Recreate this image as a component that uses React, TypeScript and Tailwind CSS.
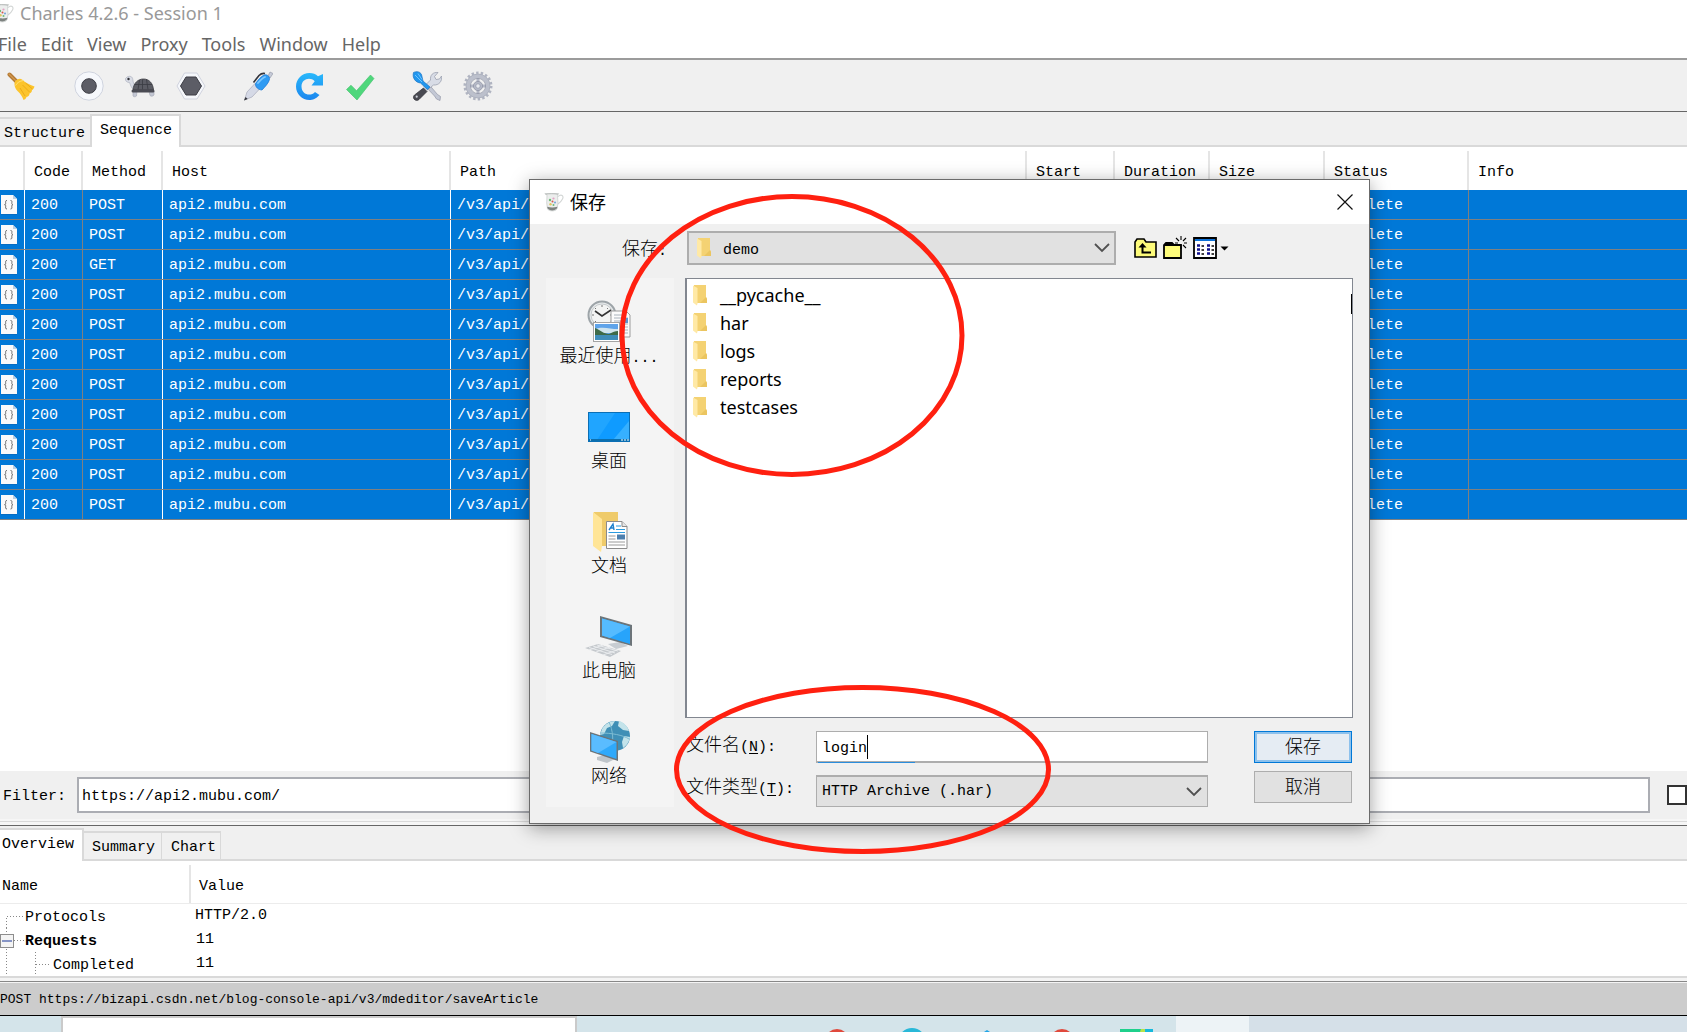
import type { ReactNode } from "react";
import clsx from "clsx";

const MONO = "font-['Liberation_Mono','Noto_Sans_CJK_SC',monospace] text-[15px]";
const SANS = "font-['Noto_Sans','Noto_Sans_CJK_SC',sans-serif] text-[18px]";

const menus = ["File", "Edit", "View", "Proxy", "Tools", "Window", "Help"];
const methods = ["POST", "POST", "GET", "POST", "POST", "POST", "POST", "POST", "POST", "POST", "POST"];
const folders = ["__pycache__", "har", "logs", "reports", "testcases"];

const columns = [
  { label: "", width: "w-[25px]", double: true },
  { label: "Code", width: "w-[58px]", double: false },
  { label: "Method", width: "w-20", double: true },
  { label: "Host", width: "w-[288px]", double: true },
  { label: "Path", width: "w-[576px]", double: true },
  { label: "Start", width: "w-[88px]", double: false },
  { label: "Duration", width: "w-[95px]", double: true },
  { label: "Size", width: "w-[115px]", double: false },
  { label: "Status", width: "w-[144px]", double: false },
  { label: "Info", width: "", double: false },
];

function JugIcon({ className }: { className?: string }) {
  return (
    <svg viewBox="0 0 20 20" className={className} aria-hidden>
      <path d="M14 4.500c3.500-3 6-.5 4.500 2.500S15.500 11 14 12" fill="none" stroke="#d3d6d5" strokeWidth="1.100" />
      <path d="M.8 1.500 3 3l-.3 8 .8 6c1.500 2.500 8 2.500 9.500 0l1-6-.5-7.500 1.200-2Z" fill="#eceeed" stroke="#c6cac8" strokeWidth=".7" />
      <path d="M3.400 16c1.500 3.200 8 3.200 9.700 0l.2-1.300c-3 1-7 1-10 0Z" fill="#7e8380" />
      <path d="M1.500 2.300c3-.8 9-.8 12.500 0" stroke="#b9bdbb" fill="none" />
      <circle cx="6" cy="8" r="1.200" fill="#6dba78" />
      <circle cx="9.500" cy="6.500" r="1.100" fill="#e3a3c2" />
      <circle cx="11" cy="10.500" r="1.100" fill="#7da9da" />
      <circle cx="6.500" cy="12.300" r="1.200" fill="#e2c562" />
      <circle cx="8.500" cy="9.500" r="1" fill="#d8564c" />
      <circle cx="9.500" cy="13" r="1" fill="#6dba78" />
    </svg>
  );
}

function BroomIcon() {
  return (
    <svg viewBox="0 0 30 30" className="size-[30px]" aria-hidden>
      <path d="m2.500 3.500 8 8" stroke="#b47a35" strokeWidth="4" strokeLinecap="round" />
      <path d="m2 3 8 8" stroke="#d29a50" strokeWidth="1.200" strokeLinecap="round" />
      <path d="M8 10.500c2-2.500 5-3.500 7-2l3 2.500c3 1.500 6 3.500 9.500 4.500-.5 2-1.500 3-2.500 3.500 0 2-1 3-2.500 3.500 0 2-1 3-3 3.500-.5 1.500-1.500 2.500-3 3-1.500-4-3-6-5.500-8.500C8.500 18 6.500 14 8 10.500Z" fill="#fcc42c" />
      <path d="m13 17 5 8m-2.500-11 7 7m-4-9 7 6" stroke="#e7a414" strokeWidth=".8" fill="none" />
      <path d="M8.500 14.500c2-3 4-4.500 8-5" stroke="#ffe07a" fill="none" />
    </svg>
  );
}

function RecordIcon() {
  return (
    <svg viewBox="0 0 30 30" className="size-[30px]" aria-hidden>
      <circle cx="15" cy="15" r="14.200" fill="#f6f8fc" stroke="#cfd3de" />
      <circle cx="15" cy="15" r="7.300" fill="#5c5d66" stroke="#3c3d45" />
    </svg>
  );
}

function TurtleIcon() {
  return (
    <svg viewBox="0 0 30 30" className="size-[30px]" aria-hidden>
      <path d="M2 6C5 4.500 7.500 5.500 7.800 8.500c.3 3 1.200 6 3.200 7.500l-2 3C6 17 5.500 13.500 4.500 11.500 2 11.500 0 10 .5 7.500Z" fill="#d9dce5" stroke="#aeb2bf" strokeWidth=".7" />
      <circle cx="3.500" cy="8" r="1.200" fill="#2f3036" />
      <path d="M8 20h4l-.5 5c-1 1-3 1-3.500 0Zm16 0h5v4c-1 1.500-3 1.500-4 .500Z" fill="#c3c7d3" stroke="#a1a5b2" strokeWidth=".6" />
      <path d="M8 19C8.500 12 13 8 18.500 8S28 12 28.500 19Z" fill="#5b5c64" stroke="#36373d" strokeWidth=".8" />
      <path d="M14.500 9 13 18.500m4.500-10v10m4-10 1.500 10M10 13.500h17" stroke="#3a3b42" strokeWidth=".8" fill="none" />
      <rect x="6.500" y="18.500" width="23" height="3" rx="1.500" fill="#4a4b53" />
    </svg>
  );
}

function HexagonIcon() {
  return (
    <svg viewBox="0 0 30 30" className="size-[30px]" aria-hidden>
      <path d="M8.500 2h12.500l8 13-8 13H8.500L1 15Z" fill="#f5f7fb" stroke="#d0d3de" />
      <path d="M10 6h10l5.500 9-5.500 9H10l-5.500-9Z" fill="#5c5d66" stroke="#3c3d45" />
    </svg>
  );
}

function PenIcon() {
  return (
    <svg viewBox="0 0 30 30" className="size-[30px]" aria-hidden>
      <path d="m1.500 29 2.500-8L12 12.500l5 5-8 8.500Z" fill="#d5d9e6" stroke="#a7abba" strokeWidth=".7" />
      <path d="m1 29.500 1.500-3.500 2.200 2Z" fill="#34353c" />
      <path d="M25 5 27 1l3 1.500L27 7Z" fill="#c7cbd8" stroke="#979cac" strokeWidth=".7" />
      <path d="M12.500 12.500c3-4 6-7.500 9-8.700 3-.5 5.500 2 5 4.700-1 3.500-4.500 7.500-7.500 10.500-3.500 0-7-3-6.500-6.500Z" fill="#2f9bf3" stroke="#1674d2" strokeWidth=".7" />
      <path d="M15 12c2.500-3 4.500-5 7-6" stroke="#7cc8ff" strokeWidth="1.800" fill="none" strokeLinecap="round" />
      <path d="M10.500 11.500 16 4.500c1.500-1.500 3.500-2.500 6-2" fill="none" stroke="#33343b" strokeWidth="1.600" />
    </svg>
  );
}

function ReloadIcon() {
  return (
    <svg viewBox="0 0 30 30" className="size-[30px]" aria-hidden>
      <defs>
        <linearGradient id="reload" x1="0" y1="0" x2="0" y2="1">
          <stop offset="0" stopColor="#29b8fb" />
          <stop offset="1" stopColor="#1b86ee" />
        </linearGradient>
      </defs>
      <path d="M15.500 2c3.500 0 6.200 1.200 8.500 3.200L29 3v11.500H17.500l3.200-4.300C16 5.500 7.500 8 7.500 15.500c0 8 9 10.500 13.500 5.500l4.500 3C22 28 18.500 29 15.500 29 8 29 2 23 2 15.500S8 2 15.500 2Z" fill="url(#reload)" />
    </svg>
  );
}

function TickIcon() {
  return (
    <svg viewBox="0 0 30 30" className="size-[30px]" aria-hidden>
      <path d="m1.500 18.500 4.500-4.300 5.500 5.500L25.500 4l3.500 3.500L12 29Z" fill="#4fd77c" stroke="#3fc069" strokeWidth=".6" />
    </svg>
  );
}

function ToolsIcon() {
  return (
    <svg viewBox="0 0 30 30" className="size-[30px]" aria-hidden>
      <path d="m14 16 3-2.500 8.500 10 3 2-.5 4-3.500-1.500-2-3Z" fill="#c3c8d5" stroke="#9398a8" strokeWidth=".7" />
      <path d="M12 15.500 18.500 9C18 4 21 1 26 1.500l-3.500 4L24 8.500l3.500-.5 2-3c1 5-2.500 9.500-8 9l-6 5Z" fill="#d8dce6" stroke="#9ca1b0" strokeWidth=".8" />
      <path d="M1.500 1.500c3-1.500 6.500-1 8 2l1.500 6.500 7 6-2.500 2.500-7-6.500C3.500 11.500 0 7 1.500 1.500Z" fill="#2196ee" stroke="#1b74c4" strokeWidth=".7" />
      <path d="m3 4 7 7M6 2.500l4 6" stroke="#6fc6ff" strokeWidth="1" />
      <path d="m11.500 17 3.500 3.500-8 8c-1.500 1.500-4 1-5-.5s-.5-3 .5-4Z" fill="#494a52" stroke="#2c2d33" strokeWidth=".7" />
      <circle cx="4.700" cy="25.700" r="1.100" fill="#cfd2da" />
    </svg>
  );
}

function GearIcon() {
  return (
    <svg viewBox="0 0 30 30" className="size-[30px]" aria-hidden>
      <circle cx="15" cy="15" r="13" fill="none" stroke="#b0b4c1" strokeWidth="3" strokeDasharray="2.400 2.139" />
      <circle cx="15" cy="15" r="10" fill="none" stroke="#bcc0cc" strokeWidth="4.400" />
      <circle cx="15" cy="15" r="12" fill="none" stroke="#a3a7b5" strokeWidth=".6" />
      <path d="M15 7v16M7 15h16" stroke="#b3b7c5" strokeWidth="3" />
      <circle cx="15" cy="15" r="7.600" fill="none" stroke="#9195a5" strokeWidth=".7" />
      <circle cx="15" cy="15" r="4.600" fill="#b6bac8" stroke="#8c91a2" strokeWidth=".7" />
      <circle cx="15" cy="15" r="2.200" fill="#e9ebf0" stroke="#8c91a2" strokeWidth=".6" />
    </svg>
  );
}

function JsonFileIcon() {
  return (
    <svg viewBox="0 0 18 20" className="h-5 w-[18px]" aria-hidden>
      <path d="M1 1h12l4 4v15H1Z" fill="#0a5fae" opacity=".5" />
      <path d="M1 0h12l4 4v15H1Z" fill="#fafafa" />
      <path d="M13 0v4h4Z" fill="#b9cfe4" />
      <path d="M7 5.500c-2 0-1.300 1.500-1.300 2.700s-.4 1.500-1.200 1.500c.8 0 1.200.4 1.200 1.500s-.7 2.800 1.300 2.800M10.500 5.500c2 0 1.300 1.500 1.300 2.700s.4 1.500 1.200 1.500c-.8 0-1.200.4-1.200 1.500s.7 2.800-1.300 2.800" fill="none" stroke="#6d6d6d" />
    </svg>
  );
}

function FolderIcon() {
  return (
    <svg viewBox="0 0 15 21" className="h-[21px] w-[15px] shrink-0" aria-hidden>
      <path d="M1 0h12v12l1 2v4H1Z" fill="#f4d273" />
      <path d="M13 12 14 14v4H7Z" fill="#ebc560" />
      <path d="M0 .5 4.500 3v15.500l-.6 2L0 17.500Z" fill="#ffe9a6" />
    </svg>
  );
}

function Chevron() {
  return (
    <svg viewBox="0 0 16 10" className="pointer-events-none absolute right-[6px] top-3 h-[10px] w-4" aria-hidden>
      <path d="m1 1 7 7 7-7" fill="none" stroke="#505050" strokeWidth="1.800" />
    </svg>
  );
}

function RecentIcon() {
  return (
    <svg viewBox="0 0 48 48" className="size-12" aria-hidden>
      <circle cx="17" cy="17" r="13.500" fill="#e7eaeb" stroke="#9da4a8" strokeWidth="2" />
      <circle cx="17" cy="17" r="11" fill="#f3f4f3" stroke="#c5cacc" />
      <path d="M17 7v2m0 16v2M7 17h2m16 0h2M10 10l1 1m12-1-1 1M10 24l1-1" stroke="#777" />
      <path d="m10 13 7 5 9-6" fill="none" stroke="#333" strokeWidth="1.600" />
      <path d="M26 13h15l4 4v22H26Z" fill="#fbfbfb" stroke="#9b9b9b" />
      <path d="M29 17h11M29 20h14M29 23h14M39 26h4M39 29h4M39 32h4M39 35h4" stroke="#a9b2bb" />
      <path d="M39 20h4v5h-4Z" fill="#5b95d0" />
      <rect x="8.500" y="24.500" width="26" height="19" fill="#fff" stroke="#a4a4a4" />
      <path d="M10 26h23v16H10Z" fill="#5fa4ea" />
      <path d="M10 31c8-3 15 0 23 0v4H10Z" fill="#cfe4ee" />
      <path d="M10 30c5 2 9 6 14 6 4-2 6-3 9-3v5H10Z" fill="#3d6a48" />
      <path d="M10 37h23v5H10Z" fill="#3e8cb8" />
    </svg>
  );
}

function DesktopIcon() {
  return (
    <svg viewBox="0 0 48 48" className="size-12" aria-hidden>
      <rect x="3.500" y="9.500" width="41" height="29" fill="#0f9bff" stroke="#0b6fb5" />
      <path d="M4 10h26L12 37H4Z" fill="#20a5ff" />
      <path d="M28 37 44 18v19Z" fill="#36b0ff" />
      <path d="M4 36h40v2H4Z" fill="#0b6fae" />
      <path d="M5 37h1m30 0h2m1 0h2m1 0h2" stroke="#fff" />
    </svg>
  );
}

function DocumentsIcon() {
  return (
    <svg viewBox="0 0 48 48" className="size-12" aria-hidden>
      <path d="M9 4h24v34H12Z" fill="#efcb6a" />
      <path d="m8 4 9 7v27l-1 6-8-6Z" fill="#ffe597" />
      <path d="M21.500 13.500H37l5 5v22H21.500Z" fill="#fff" stroke="#8b8b8b" />
      <path d="M37 13.500v5h5" fill="#e6e6e6" stroke="#8b8b8b" />
      <path d="m24 22 4-6 1 6m-3.500-2H29" stroke="#1d80cd" strokeWidth="1.400" fill="none" />
      <path d="M31 18h5M31 21.500h9M23.500 24.500H40" stroke="#2a9be0" />
      <path d="M23.500 28h7M23.500 31h7M23.500 34H40M23.500 37H40" stroke="#9a9a9a" />
      <path d="M32 26.500h8v5h-8Z" fill="#4c7fae" />
    </svg>
  );
}

function ComputerIcon() {
  return (
    <svg viewBox="0 0 48 48" className="size-12" aria-hidden>
      <path d="m23 31 12-2 8 4-12 3Z" fill="#c8cdd2" />
      <path d="m15 3 32 9v21L15 24Z" fill="#6c7479" />
      <path d="m17 5.500 28 8V31L17 22.500Z" fill="#27a4fb" />
      <path d="m17 5.500 28 8L25 25l-8-2.500Z" fill="#55bbff" />
      <path d="m0 35 13-4 23 7-11 6Z" fill="#c5c9cd" />
      <path d="m4 34.500 23 7M8 33l22 7M12 32l21 6M4 37l14-5M11 39l14-5M18 42l14-5" stroke="#eceef0" strokeWidth=".9" />
    </svg>
  );
}

function NetworkIcon() {
  return (
    <svg viewBox="0 0 48 48" className="size-12" aria-hidden>
      <circle cx="30" cy="18" r="15" fill="#3f8fb6" />
      <path d="M17 11c3-5 8-8 13-8l-3 5-5 2-3 6-4 1Zm17-8c5 1 9 6 10 10l-6-1-5-4Zm5 15 6 1c-1 6-4 9-7 11l-1-6Z" fill="#c3e3ea" />
      <path d="M24 4c4 8 5 20 2 28M16 15c10 0 22 2 28 6" stroke="#7dbcd3" fill="none" />
      <path d="m12 39 8-2 10 4-8 4-10-3Z" fill="#bfc5ca" />
      <path d="m5 14 28 9v20L5 33.500Z" fill="#6c7479" />
      <path d="m6.500 16 25 8v17l-25-8.500Z" fill="#2fa9fb" />
      <path d="m6.500 16 25 8L13 35l-6.500-2.500Z" fill="#5abcff" />
    </svg>
  );
}

function UpFolderIcon() {
  return (
    <svg viewBox="0 0 23 20" className="h-5 w-[23px]" aria-hidden>
      <path d="M1 19V4l2-3h7l2 3h10v15Z" fill="#fdfb7a" stroke="#000" strokeWidth="1.600" />
      <path d="M8.500 7v7.500H17" fill="none" stroke="#000" strokeWidth="2" />
      <path d="m4.500 9.500 4-4.500 4 4.500Z" />
    </svg>
  );
}

function NewFolderIcon() {
  return (
    <svg viewBox="0 0 24 24" className="h-6 w-6" aria-hidden>
      <path d="M1 22V9l2-2h6l2 2h7v13Z" fill="#fdfb7a" stroke="#000" strokeWidth="1.800" />
      <path d="M1 9h17" stroke="#000" strokeWidth="2" />
      <path d="M18 0v4m0 5v4M13 2l3 3m4 4 3 3m0-10-3 3M12 7h3m6 0h3" stroke="#000" strokeWidth="1.100" />
    </svg>
  );
}

function ViewMenuIcon() {
  return (
    <svg viewBox="0 0 36 22" className="h-[22px] w-9" aria-hidden>
      <path d="M1 1h22v20H1Z" fill="#fff" stroke="#000" strokeWidth="1.800" />
      <path d="M2 2h20v2H2Z" fill="#0f72d8" />
      <path d="M4 8.500h3m-3 4h3m-3 4h3M14 8.500h3m-3 4h3m-3 4h3" stroke="#10108c" strokeWidth="2.400" />
      <path d="M8.500 9H11m-2.500 4H11m-2.500 4H11M18.500 9H21m-2.500 4H21m-2.500 4H21" stroke="#000" strokeWidth="1.400" />
      <path d="M27.500 9.500h8l-4 4Z" />
    </svg>
  );
}

const toolGroups = [
  [{ name: "Clear", icon: <BroomIcon /> }],
  [
    { name: "Record", icon: <RecordIcon /> },
    { name: "Throttle", icon: <TurtleIcon /> },
    { name: "Breakpoints", icon: <HexagonIcon /> },
  ],
  [
    { name: "Compose", icon: <PenIcon /> },
    { name: "Repeat", icon: <ReloadIcon /> },
    { name: "Validate", icon: <TickIcon /> },
  ],
  [
    { name: "Tools", icon: <ToolsIcon /> },
    { name: "Settings", icon: <GearIcon /> },
  ],
];

const places = [
  { label: "最近使用", more: true, icon: <RecentIcon /> },
  { label: "桌面", icon: <DesktopIcon /> },
  { label: "文档", icon: <DocumentsIcon /> },
  { label: "此电脑", icon: <ComputerIcon /> },
  { label: "网络", icon: <NetworkIcon /> },
];

function Tab({ active, className, children }: { active?: boolean; className: string; children: ReactNode }) {
  return (
    <button
      type="button"
      className={clsx(
        "border-[#d9d9d9] text-left",
        active ? "relative z-10 h-[33px] border-x-2 border-t-2 bg-white pb-[2px]" : "h-[30px] border-t-2 border-b-2 bg-[#f0f0f0] pt-1",
        className
      )}
    >
      {children}
    </button>
  );
}

function RequestTable() {
  return (
    <table className="w-full table-fixed border-separate border-spacing-0">
      <thead>
        <tr className="h-[43px]">
          {columns.map((c, i) => (
            <th key={i} className={clsx("p-0 pt-1 text-left font-normal", c.width)}>
              <div className={clsx("flex h-[39px] items-center pt-1 pl-[9px]", i < 9 && "border-r-2 border-[#e5e5e5]")}>
                {c.label}
              </div>
            </th>
          ))}
        </tr>
      </thead>
      <tbody className="text-white">
        {methods.map((method, row) => (
          <tr key={row} className="h-[30px] bg-[#0078d7]">
            {[<JsonFileIcon />, "200", method, "api2.mubu.com", "/v3/api/", "", "", "", "Complete", ""].map((cell, i) => (
              <td key={i} className="border-b border-[#808080] p-0">
                <div
                  className={clsx(
                    "flex h-[29px] items-center",
                    i > 0 && "pt-[2px] pl-[6px]",
                    i < 9 && (columns[i].double ? "border-r border-white" : "border-r border-[#808080]")
                  )}
                >
                  {cell}
                </div>
              </td>
            ))}
          </tr>
        ))}
      </tbody>
    </table>
  );
}

function Details() {
  return (
    <table className="w-full table-fixed border-separate border-spacing-0 bg-white">
      <thead>
        <tr className="h-[43px]">
          <th className="w-[191px] border-b border-[#ececec] p-0 pt-1 text-left font-normal">
            <div className="flex h-[38px] items-center border-r-2 border-[#e5e5e5] pt-[6px] pl-[2px]">Name</div>
          </th>
          <th className="border-b border-[#ececec] p-0 pt-[10px] pl-2 text-left font-normal">Value</th>
        </tr>
      </thead>
      <tbody className="leading-6">
        <tr>
          <td className="h-6 p-0">
            <div className="flex h-6 items-center">
              <svg viewBox="0 0 25 24" className="h-6 w-[25px]" aria-hidden>
                <path d="M6.500 24V12.500H24" fill="none" stroke="#888" strokeDasharray="1 2" />
              </svg>
              <span className="pt-1">Protocols</span>
            </div>
          </td>
          <td className="h-6 p-0 pl-1">HTTP/2.0</td>
        </tr>
        <tr>
          <td className="h-6 p-0">
            <div className="flex h-6 items-center font-bold">
              <svg viewBox="0 0 25 24" className="h-6 w-[25px]" aria-hidden>
                <path d="M6.500 0v24M14 12.500h10" fill="none" stroke="#888" strokeDasharray="1 2" />
                <rect x=".5" y="6.500" width="13" height="13" fill="#f4f4f4" stroke="#8d8d8d" />
                <path d="M2 13h10" stroke="#3d54a5" strokeWidth="1.200" />
              </svg>
              <span className="pt-1">Requests</span>
            </div>
          </td>
          <td className="h-6 p-0 pl-[5px]">11</td>
        </tr>
        <tr>
          <td className="h-6 p-0">
            <div className="flex h-6 items-center">
              <svg viewBox="0 0 53 24" className="h-6 w-[53px]" aria-hidden>
                <path d="M6.500 0v24M35.500 0v24M36 12.500h14" fill="none" stroke="#888" strokeDasharray="1 2" />
              </svg>
              <span className="pt-1">Completed</span>
            </div>
          </td>
          <td className="h-6 p-0 pl-[5px]">11</td>
        </tr>
      </tbody>
    </table>
  );
}

function SaveDialog() {
  return (
    <section
      role="dialog"
      aria-labelledby="save-title"
      className="absolute left-[529px] top-[179px] z-20 w-[841px] border border-[#6b6b6b] bg-[#f0f0f0] text-black shadow-[0_4px_18px_rgba(0,0,0,0.38)]"
    >
      <header className="flex h-11 items-center bg-white pl-[14px] pr-4">
        <JugIcon className="size-5" />
        <h2 id="save-title" className={clsx(SANS, "ml-[6px] flex-1 leading-6")}>
          保存
        </h2>
        <button type="button" aria-label="Close" className="size-4">
          <svg viewBox="0 0 16 16" className="size-4" aria-hidden>
            <path d="m.5.5 15 15m0-15-15 15" stroke="#111" strokeWidth="1.200" />
          </svg>
        </button>
      </header>

      <div className="flex items-center pt-[7px]">
        <label htmlFor="save-in" className="w-[157px] pt-[6px] pl-[92px] text-[18px] leading-6 font-light">
          保存<span className="text-[15px]">:</span>
        </label>
        <div className="relative w-[429px]">
          <select
            id="save-in"
            className="h-[34px] w-full appearance-none border-2 border-[#adadad] bg-[#e1e1e1] pt-[6px] pl-[34px] outline-none"
          >
            <option>demo</option>
          </select>
          <span className="pointer-events-none absolute left-[10px] top-[7px]">
            <FolderIcon />
          </span>
          <Chevron />
        </div>
        <div className="flex items-center gap-[6px] pl-[18px]">
          <button type="button" aria-label="Up one level">
            <UpFolderIcon />
          </button>
          <button type="button" aria-label="New folder">
            <NewFolderIcon />
          </button>
          <button type="button" aria-label="View menu">
            <ViewMenuIcon />
          </button>
        </div>
      </div>

      <div className="flex gap-[11px] pt-[13px] pr-4 pb-4 pl-4">
        <nav className="flex w-32 flex-col gap-9 bg-[#f4f4f4] py-5 pr-[2px]">
          {places.map((p) => (
            <button key={p.label} type="button" className="flex flex-col items-center gap-px text-[18px] leading-5 font-light">
              {p.icon}
              <span className="block h-5">
                {p.label}
                {p.more ? <span className="text-[15px]">...</span> : null}
              </span>
            </button>
          ))}
        </nav>

        <div className="min-w-0 flex-1">
          <div className="relative">
            <ul className={clsx(SANS, "h-[440px] border-y border-r border-l-2 border-[#828790] bg-white pt-[2px] pl-[6px]")}>
              {folders.map((f) => (
                <li key={f} className="flex h-7 items-center gap-3 leading-6">
                  <FolderIcon />
                  {f}
                </li>
              ))}
            </ul>
            <span className="absolute right-px top-4 h-5 w-px bg-black" />
          </div>

          <form className="flex justify-between pt-[13px]">
            <div className="w-[523px]">
              <div className="flex h-8 items-center">
                <label htmlFor="file-name" className="w-[131px] pl-px text-[18px] font-light">
                  文件名
                  <span className="text-[15px]">
                    (<span className="underline underline-offset-2">N</span>):
                  </span>
                </label>
                <div className="relative flex-1">
                  <input
                    id="file-name"
                    defaultValue="login"
                    className="block h-8 w-full border border-b-2 border-[#adadad] bg-white px-[5px] pt-1 outline-none"
                  />
                  <span className="absolute left-[51px] top-1 h-6 w-px bg-black" />
                  <span className="absolute bottom-0 left-[2px] h-px w-[97px] bg-[#2a8ddd]" />
                </div>
              </div>
              <div className="mt-3 flex h-8 items-center">
                <label htmlFor="file-type" className="w-[131px] pb-1 pl-px text-[18px] font-light">
                  文件类型
                  <span className="text-[15px]">
                    (<span className="underline underline-offset-2">T</span>):
                  </span>
                </label>
                <div className="relative flex-1">
                  <select
                    id="file-type"
                    className="block h-8 w-full appearance-none border border-t-2 border-[#adadad] bg-[#e1e1e1] px-[5px] outline-none"
                  >
                    <option>HTTP Archive (.har)</option>
                  </select>
                  <Chevron />
                </div>
              </div>
            </div>
            <div className="flex flex-col gap-2 pr-px text-[18px] font-light">
              <button
                type="button"
                className="h-8 w-[98px] border border-[#0078d7] bg-[#e5ecf3] pt-[2px] leading-7 shadow-[inset_0_0_0_2px_#8dc1ec]"
              >
                保存
              </button>
              <button type="button" className="h-8 w-[98px] border border-[#adadad] bg-[#e1e1e1] pt-[2px] leading-7">
                取消
              </button>
            </div>
          </form>
        </div>
      </div>
    </section>
  );
}

/* Hand-drawn highlight rings above the dialog */
function Rings() {
  return (
    <svg className="pointer-events-none absolute left-[600px] top-[180px] z-30 h-[690px] w-[470px]" viewBox="0 0 470 690" aria-hidden>
      <ellipse cx="192" cy="155.500" rx="170" ry="139" fill="none" stroke="#ff2010" strokeWidth="5" />
      <ellipse cx="262.500" cy="589.500" rx="186" ry="82" fill="none" stroke="#ff2010" strokeWidth="5" />
    </svg>
  );
}

function Taskbar() {
  return (
    <footer className="flex h-4 overflow-hidden bg-[#d4e4ea] pl-[61px]">
      <div className="w-[516px] border-x-2 border-t-2 border-[#cacaca] bg-white" />
      <svg viewBox="0 0 599 16" className="h-4 w-[599px]" aria-hidden>
        <circle cx="260" cy="25" r="12" fill="#e0493c" />
        <circle cx="335" cy="26" r="14" fill="#29b8d8" />
        <path d="m410 14 3 2h-6Z" fill="#20a4e6" />
        <circle cx="485" cy="25" r="12" fill="#e0493c" />
        <path d="M543 13h21v3h-21Z" fill="#1fd08c" />
        <path d="M564 13h5v3h-6Z" fill="#b6e34a" />
        <path d="M568 13h8v3h-8Z" fill="#15b9dc" />
      </svg>
      <div className="w-[73px] bg-[#edf3f6]" />
      <div className="flex-1 bg-[#d5e0e8]" />
    </footer>
  );
}

export default function App() {
  return (
    <div className={clsx(MONO, "relative flex h-screen flex-col overflow-hidden bg-white leading-5 text-black")}>
      <header className={clsx(SANS, "flex h-7 items-center pb-[2px] text-[#999]")}>
        <JugIcon className="-ml-[6px] size-5" />
        <h1 className="ml-[6px] leading-6">Charles 4.2.6 - Session 1</h1>
      </header>
      <nav className={clsx(SANS, "flex h-8 items-center gap-[14px] border-b-2 border-[#9b9b9b] pt-[2px] text-[#666]")}>
        {menus.map((m) => (
          <button key={m} type="button" className="leading-6 first:-ml-[2px]">
            {m}
          </button>
        ))}
      </nav>

      <div className="flex h-[52px] items-center gap-[37px] border-b border-[#666] bg-[#f0f0f0] pl-[7px]">
        {toolGroups.map((group, i) => (
          <div key={i} className="flex gap-[21px]">
            {group.map((t) => (
              <button key={t.name} type="button" aria-label={t.name}>
                {t.icon}
              </button>
            ))}
          </div>
        ))}
      </div>

      <div className="flex h-[35px] items-end bg-[#f0f0f0]">
        <Tab className="w-[90px] pl-1">Structure</Tab>
        <Tab active className="w-[91px] pl-2">
          Sequence
        </Tab>
        <span className="flex-1 border-b-2 border-[#d9d9d9]" />
      </div>

      <main className="min-h-0 flex-1">
        <RequestTable />
      </main>

      <div className="flex h-12 items-center bg-[#f0f0f0] pl-[3px]">
        <label htmlFor="filter" className="w-[74px] pt-1">
          Filter:
        </label>
        <input
          id="filter"
          defaultValue="https://api2.mubu.com/"
          className="h-9 min-w-0 flex-1 border-2 border-[#abadb3] bg-white px-[3px] pt-[2px] outline-none"
        />
        <input
          type="checkbox"
          aria-label="Focused"
          className="ml-[17px] size-5 appearance-none border-2 border-[#333] bg-white"
        />
      </div>
      <div className="h-[7px] border-b border-[#666] bg-[#f6f6f6] pt-[2px]">
        <div className="h-px bg-[#d9d9d9]" />
      </div>

      <div className="flex h-[35px] items-end bg-[#f0f0f0]">
        <Tab active className="w-[84px] border-l-0 pl-[2px]">
          Overview
        </Tab>
        <Tab className="w-[78px] border-r pl-2">Summary</Tab>
        <Tab className="w-[59px] border-r pl-[9px]">Chart</Tab>
        <span className="flex-1 border-b-2 border-[#d9d9d9]" />
      </div>
      <Details />

      <div className="h-[7px] border-t-2 border-[#d9d9d9] bg-[#f4f4f4] pt-[3px]">
        <div className="h-px bg-[#888]" />
      </div>
      <p className="h-8 bg-[#ccc] pt-px text-[13px] leading-8 whitespace-nowrap">
        POST https://bizapi.csdn.net/blog-console-api/v3/mdeditor/saveArticle
      </p>
      <div className="h-px bg-black" />
      <Taskbar />

      <SaveDialog />
      <Rings />
    </div>
  );
}
